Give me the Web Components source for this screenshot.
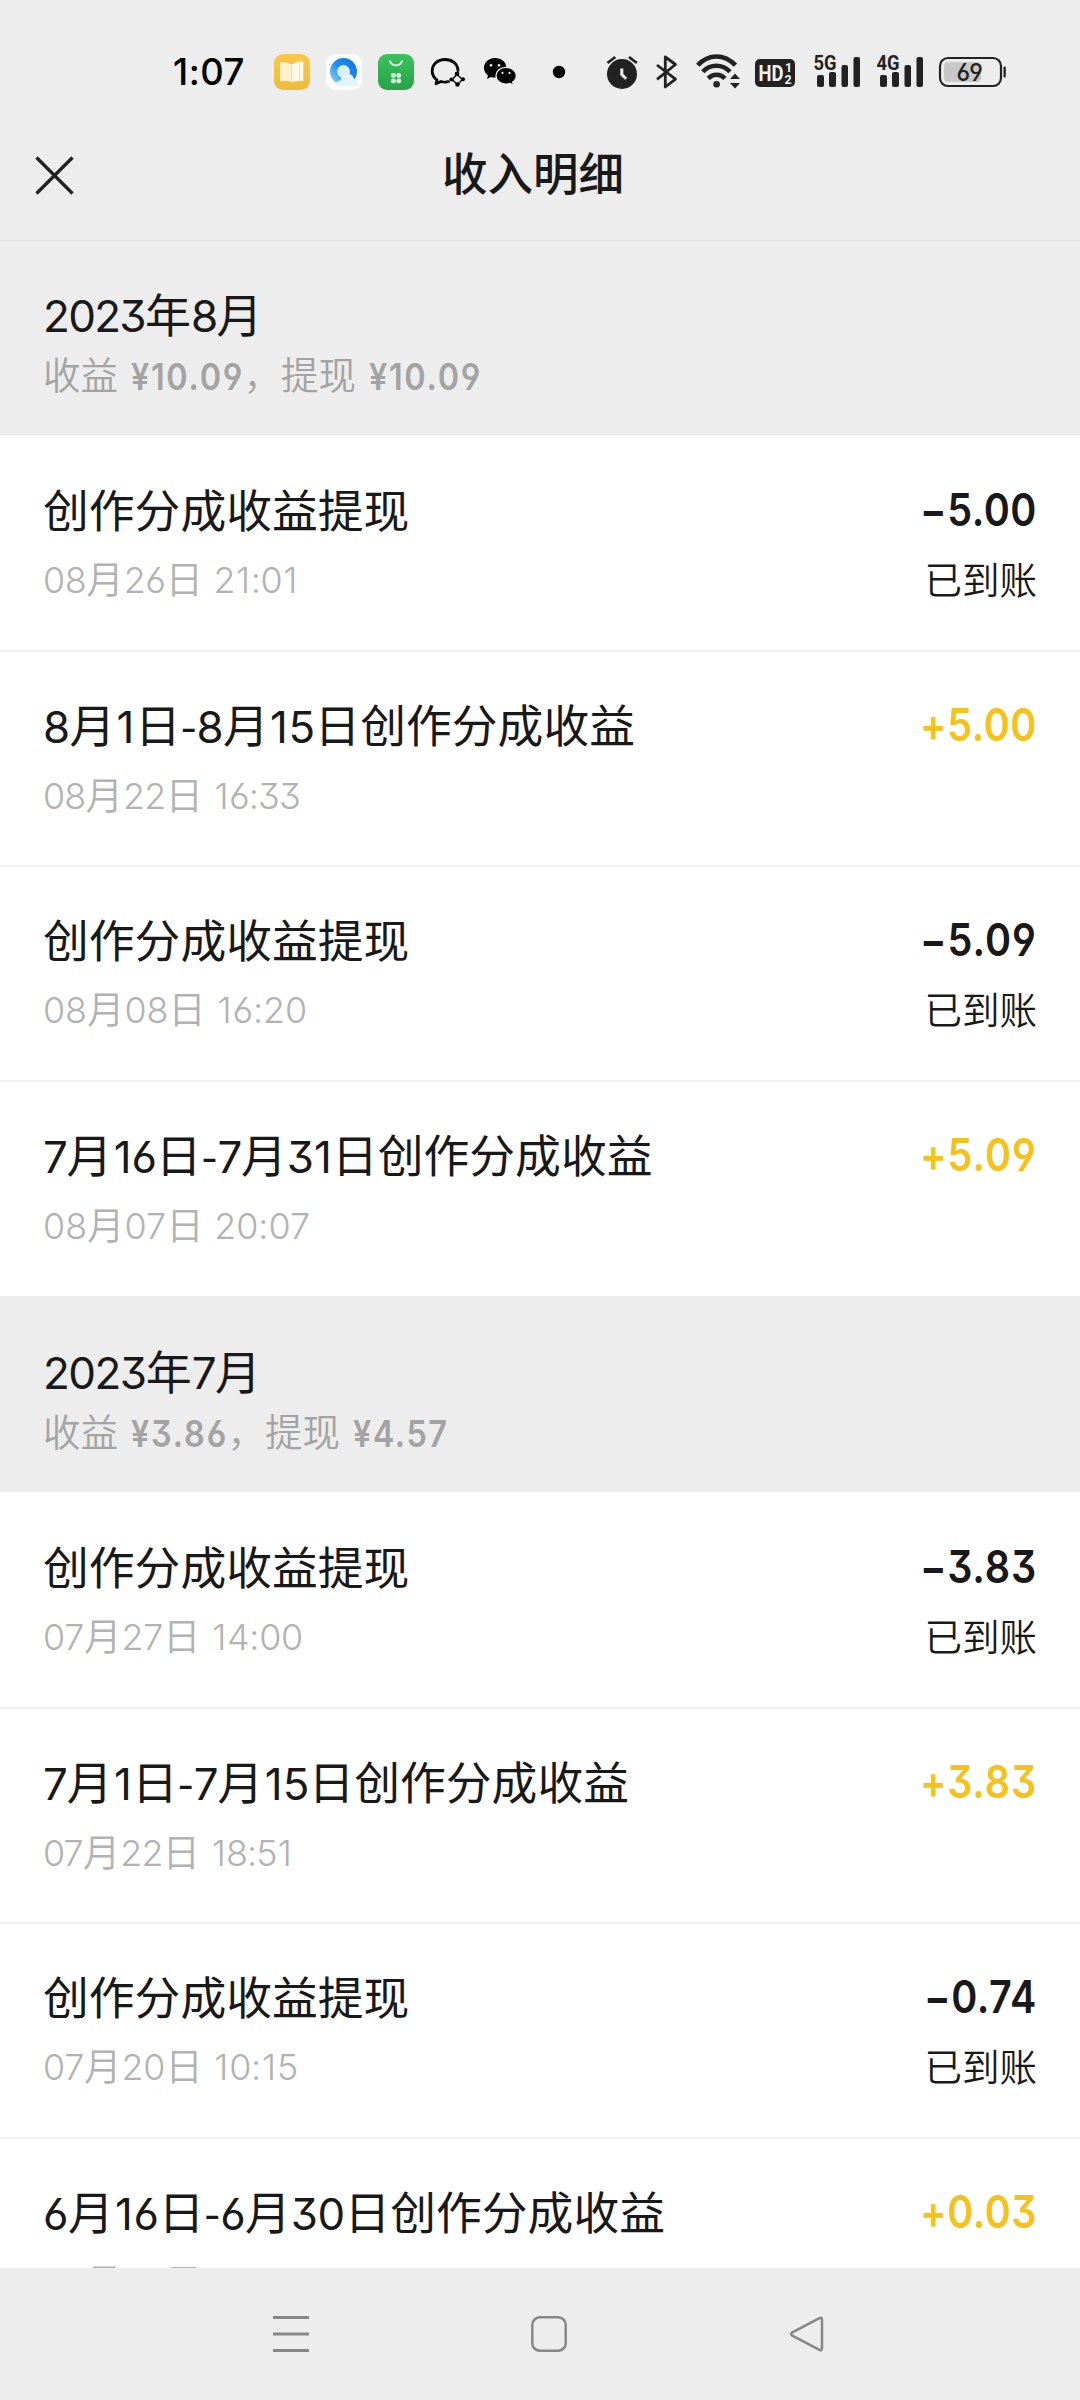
<!DOCTYPE html>
<html lang="zh-CN">
<head>
<meta charset="utf-8">
<title>收入明细</title>
<style>
html,body{margin:0;padding:0}
body{width:1080px;height:2400px;overflow:hidden;background:#ededed;font-family:Inter,"Noto Sans CJK SC",sans-serif;color:#191919}
</style>
</head>
<body>
<income-page></income-page>
<script>
// Wraps digit runs so that they can carry their own size and tracking.
const mixed = s => s.replace(/[0-9:]+|-/g, m => m === '-' ? '<span class="h">-</span>' : `<span class="n">${m.replace(/1/g, '<span class="one">1</span>')}</span>`);
// Tracks the digits of a line so that the line takes data-w pixels; data-k condenses it.
const fit = root => root.querySelectorAll('[data-w]').forEach(el => {
  const w = +el.dataset.w, k = +(el.dataset.k || 1);
  const count = [...el.querySelectorAll('.n')].reduce((a, n) => a + n.textContent.length, 0);
  if (!w || !count) return;
  const extra = (w / k - el.getBoundingClientRect().width) / count;
  el.style.setProperty('--track', extra + 'px');
  if (k !== 1) { el.style.transform = `scaleX(${k})`; el.style.marginRight = (w - w / k) + 'px'; }
});
const define = (name, render) => customElements.define(name, class extends HTMLElement {
  connectedCallback() {
    if (this.shadowRoot) return;
    this.attachShadow({ mode: 'open' }).innerHTML = render(this);
    fit(this.shadowRoot);
  }
});
const digits = `
.n{font-size:.957em;font-weight:inherit;font-feature-settings:"cv09","cv03","cv04","calt" 0;letter-spacing:var(--track,0px)}
.one{letter-spacing:calc(var(--track,0px) + .03em);margin-left:.03em}
.h{font-family:"Noto Sans CJK SC";line-height:0}`;

define('status-bar', () => `
<style>
:host{display:flex;height:104px;padding:40px 0 0 173px;box-sizing:border-box;align-items:center}
svg{display:block;flex:none;overflow:visible;margin:-20px 0}
.time{font-size:36.5px;font-weight:500;color:#000;width:101px;line-height:50px;letter-spacing:.5px}
text{font-family:Roboto,sans-serif}
</style>
<div class="time">1:07</div>
<svg width="760" height="64" viewBox="274 40 760 64">
  <defs>
    <linearGradient id="y" x2="0" y2="1"><stop stop-color="#f8c84c"/><stop offset="1" stop-color="#f0bc38"/></linearGradient>
    <linearGradient id="g" x2="0" y2="1"><stop stop-color="#3cc25e"/><stop offset="1" stop-color="#27a348"/></linearGradient>
    <linearGradient id="b" x1="0" y1="1" x2="1" y2="0"><stop stop-color="#7cc9fa"/><stop offset=".5" stop-color="#1e8fee"/><stop offset="1" stop-color="#1478e0"/></linearGradient>
  </defs>
  <rect x="274" y="54" width="36" height="36" rx="9" fill="url(#y)"/>
  <path d="M280 62.500q6-1.200 11.500 2v17.500q-5.500-2-11.500-.500z" fill="#fff2cc"/><path d="M291.500 64.500l8-3.500 3.800 1v19q-5.500-1-11.800 1.200z" fill="#fff9e8"/><path d="M291.500 64.500v17.500M299.500 61.500v19" stroke="#f6dc94" stroke-width=".8"/>
  <rect x="326" y="54" width="36" height="36" rx="9" fill="#fff"/>
  <circle cx="343.500" cy="71.500" r="10" fill="#d9effc" stroke="url(#b)" stroke-width="7"/>
  <path d="M335.500 86q-.500-5 5-5.500 1.500-6.500 8-6.500 5 .500 5.500 5.500 4.500.500 4 6.500z" fill="#e5f3fd"/>
  <rect x="378" y="54" width="36" height="36" rx="9" fill="url(#g)"/>
  <path d="M389.800 60.500a6.400 6.400 0 0 0 12.400 0" fill="none" stroke="#e5fbe9" stroke-width="1.800"/>
  <g fill="#d2f7da"><rect x="391" y="73" width="4.800" height="4.800" rx="2"/><rect x="396.400" y="73" width="4.800" height="4.800" rx="2"/><rect x="391" y="78.400" width="4.800" height="4.800" rx="2"/><rect x="396.400" y="78.400" width="4.800" height="4.800" rx="2"/></g>
  <path d="M458 70.500C457.500 63.500 452 59.500 445 59.500C437.500 59.500 432.200 64.500 432.200 71C432.200 75 434 78 437 80L436 83.800L441 81.500Q444.500 82.600 448.500 81.700" fill="none" stroke="#000" stroke-width="2.800" stroke-linejoin="round" stroke-linecap="round"/>
  <path d="M457 74.500L462.500 79.500L457.500 84.500L452 79.500Z" fill="none" stroke="#000" stroke-width="1.300"/><g fill="#000"><circle cx="457" cy="73.800" r="2.300"/><circle cx="463" cy="79.300" r="2"/><circle cx="457.500" cy="84.500" r="2.200"/><circle cx="451.500" cy="79.500" r="2.100"/></g>
  <path d="M495 58C488.800 58 484 62.300 484 67.700C484 71 485.600 73.600 488 75.400L487 79L491 76.900Q496 78.300 500 76.700L506.300 66.500C505.700 61.500 501 58 495 58Z" fill="#000"/>
  <path d="M506 67.300C500.200 67.300 496 71.100 496 75.700C496 80.500 500.600 84.100 506.300 84.100Q508.500 84.100 510.300 83.400L513.500 85.500L512.700 82.100C515 80.600 516.300 78.300 516.300 75.700C516.300 71 511.500 67.300 506 67.300Z" fill="#000" stroke="#ededed" stroke-width="1.300"/>
  <g fill="#ededed"><circle cx="491" cy="65.200" r="1.300"/><circle cx="499" cy="65.200" r="1.300"/><circle cx="502.500" cy="72.900" r="1.100"/><circle cx="509.500" cy="72.900" r="1.100"/></g>
  <circle cx="559" cy="72" r="6.200" fill="#000"/>
  <path d="M607.500 63L615.300 57M629 57L636.800 63" fill="none" stroke="#222" stroke-width="2.800"/>
  <circle cx="622" cy="74" r="15" fill="#222"/><path d="M621.800 68.500V74.500L626.200 78.800" fill="none" stroke="#ededed" stroke-width="3"/>
  <path d="M657 65L675.500 79.200L665.300 87V57L675.500 64.500L657 79.300" fill="none" stroke="#222" stroke-width="2.800" stroke-linejoin="round"/>
  <g fill="none" stroke="#222" stroke-width="4.600"><path d="M697.800 65.200C708.500 53.500 724 53.500 735.500 65.200"/><path d="M702.800 71.800C710 63.800 722.500 63.800 730 71.800"/><path d="M708.200 78.300C713 73.500 720 73.500 725 78.300"/></g><circle cx="716.600" cy="84.300" r="3.300" fill="#222"/>
  <path d="M735 73.500L740 79H730ZM735 88.500L740 83H730Z" fill="#222"/>
  <rect x="755" y="59" width="40" height="28" rx="5" fill="#222"/>
  <text x="758.500" y="81" font-size="22" font-weight="700" fill="#f4f4f4" textLength="25" lengthAdjust="spacingAndGlyphs">HD</text>
  <text x="785" y="72" font-size="12.500" font-weight="700" fill="#f4f4f4">1</text><text x="784.500" y="84" font-size="12.500" font-weight="700" fill="#f4f4f4">2</text>
  <g fill="#222"><rect x="817" y="75" width="7" height="12" rx="2"/><rect x="829" y="72" width="7" height="15" rx="2"/><rect x="841.500" y="65" width="6.500" height="22" rx="2"/><rect x="853.500" y="57" width="6.500" height="30" rx="2"/>
  <rect x="880" y="75" width="7" height="12" rx="2"/><rect x="892" y="72" width="7" height="15" rx="2"/><rect x="904.500" y="65" width="6.500" height="22" rx="2"/><rect x="916.500" y="57" width="6.500" height="30" rx="2"/></g>
  <g font-size="21" font-weight="700" fill="#222" stroke="#ededed" stroke-width="3" paint-order="stroke"><text x="813.500" y="70" textLength="23" lengthAdjust="spacingAndGlyphs">5G</text><text x="876.500" y="70" textLength="23" lengthAdjust="spacingAndGlyphs">4G</text></g>
  <rect x="944" y="62" width="37" height="20" rx="4" fill="#c8c8c8"/>
  <rect x="940" y="58" width="61" height="28" rx="8" fill="none" stroke="#222" stroke-width="2.200"/><rect x="1003.500" y="66.500" width="2.300" height="11" rx="1" fill="#222"/>
  <text x="956.500" y="81" font-size="24.500" font-weight="500" fill="#222" textLength="26.500" lengthAdjust="spacingAndGlyphs" style="font-family:Inter;font-feature-settings:'cv03','cv04'">69</text>
</svg>`);

define('nav-header', () => `
<style>
:host{display:flex;height:137px;box-sizing:border-box;border-bottom:1px solid #e0e0e0;align-items:center;padding-left:35px}
svg{display:block;margin-top:6px}
h1{margin:6px 0 0 368px;font-size:45.500px;font-weight:500;line-height:66px;color:#191919}
</style>
<svg width="39" height="39" viewBox="0 0 39 39"><path d="M1.500 1.500L37.500 37.500M37.500 1.500L1.500 37.500" stroke="#222" stroke-width="3.300"/></svg>
<h1><slot></slot></h1>`);

define('month-head', e => `
<style>
:host{display:flex;flex-direction:column;align-items:flex-start;height:196px;box-sizing:border-box;padding:44.500px 44px 0 43px;background:#ededed}
:host([first]){height:193.500px;padding-top:42px}
.m{font-size:46px;line-height:64px;color:#191919;font-weight:370;white-space:nowrap}
.s{display:flex;font-size:37.500px;line-height:54px;margin-top:.5px;color:#a3a3a3;white-space:pre;font-weight:350}
b{display:block;transform-origin:0 50%;font-weight:600;font-size:38.500px;margin-left:12.500px;flex:none}
${digits}
</style>
<div class="m" data-w="${e.getAttribute('mw')}">${mixed(e.getAttribute('month'))}</div>
<div class="s"><span>收益</span><b data-w="${e.getAttribute('iw')}" data-k=".88"><span class="n">¥${e.getAttribute('income')}</span></b><span>，提现</span><b data-w="${e.getAttribute('ow')}" data-k=".88"><span class="n">¥${e.getAttribute('out')}</span></b></div>`);

define('income-row', e => {
  const amount = e.getAttribute('amount'), plus = amount[0] === '+';
  return `
<style>
:host{display:flex;justify-content:space-between;height:215.250px;box-sizing:border-box;padding:42px 43px 0 43px;background:#fff;border-top:2px solid #f2f2f2}
:host([first]){border-top-color:#fff}
.c{display:flex;flex-direction:column;white-space:nowrap;align-items:flex-start}
.c.r{align-items:flex-end}
.t{font-size:45.800px;line-height:66px;font-weight:370}
.d{font-size:37.500px;line-height:54px;margin-top:8px;color:#b2b2b2;font-weight:350}
.a{font-size:47px;font-weight:600;line-height:60px;transform-origin:0 50%}
.plus{color:#f5c21b}
.k{font-size:37.500px;line-height:54px;margin-top:14px;font-weight:350}
${digits}
</style>
<div class="c"><div class="t" data-w="${e.getAttribute('tw')}">${mixed(e.getAttribute('name'))}</div><div class="d" data-w="${e.getAttribute('dw')}">${mixed(e.getAttribute('date'))}</div></div>
<div class="c r"><div class="a ${plus ? 'plus' : ''}" data-w="${e.getAttribute('aw')}" data-k=".88"><span class="n">${amount}</span></div>${plus ? '' : '<div class="k">已到账</div>'}</div>`;
});

define('system-nav', () => `
<style>
:host{display:flex;height:132px;background:#ededed;align-items:center;padding-left:273px;gap:222px;box-sizing:border-box}
svg{display:block;flex:none}
</style>
<svg width="36" height="38" viewBox="0 0 36 38" stroke="#878787" stroke-width="3"><path d="M0 2.500H36M0 19H36M0 35.500H36"/></svg>
<svg width="36" height="38" viewBox="0 0 36 38" fill="none" stroke="#878787" stroke-width="2.500"><rect x="1.300" y="2.300" width="33.400" height="33.400" rx="7.500"/></svg>
<svg width="36" height="38" viewBox="0 0 36 38" fill="none" stroke="#878787" stroke-width="2.500" stroke-linejoin="round"><path d="M30.500 3.200Q33 1.800 33 4.700V33.300Q33 36.200 30.500 34.800L3.300 20.700Q0.800 19 3.300 17.300Z"/></svg>`);

const row = (n, tw, d, dw, a, aw, first = '') => `<income-row name="${n}" tw="${tw}" date="${d}" dw="${dw}" amount="${a}" aw="${aw}" ${first}></income-row>`;
define('income-page', () => `
<style>
:host{display:flex;flex-direction:column;width:1080px;height:2400px;overflow:hidden;background:#ededed}
main{flex:1;min-height:0;overflow:hidden;display:flex;flex-direction:column}
main>*{flex:none}
</style>
<status-bar></status-bar>
<nav-header>收入明细</nav-header>
<main>
<month-head first month="2023年8月" mw="219.5" income="10.09" iw="113" out="10.09" ow="113"></month-head>
${row('创作分成收益提现', 0, '08月26日 21:01', 255, '−5.00', 117, 'first')}
${row('8月1日-8月15日创作分成收益', 592, '08月22日 16:33', 257, '+5.00', 117)}
${row('创作分成收益提现', 0, '08月08日 16:20', 264, '−5.09', 117)}
${row('7月16日-7月31日创作分成收益', 609.5, '08月07日 20:07', 267, '+5.09', 117)}
<month-head month="2023年7月" mw="218" income="3.86" iw="97" out="4.57" ow="95.5"></month-head>
${row('创作分成收益提现', 0, '07月27日 14:00', 260, '−3.83', 117, 'first')}
${row('7月1日-7月15日创作分成收益', 586, '07月22日 18:51', 249, '+3.83', 117)}
${row('创作分成收益提现', 0, '07月20日 10:15', 255, '−0.74', 113)}
${row('6月16日-6月30日创作分成收益', 622, '06月30日 18:00', 260, '+0.03', 117)}
</main>
<system-nav></system-nav>`);
</script>
</body>
</html>
